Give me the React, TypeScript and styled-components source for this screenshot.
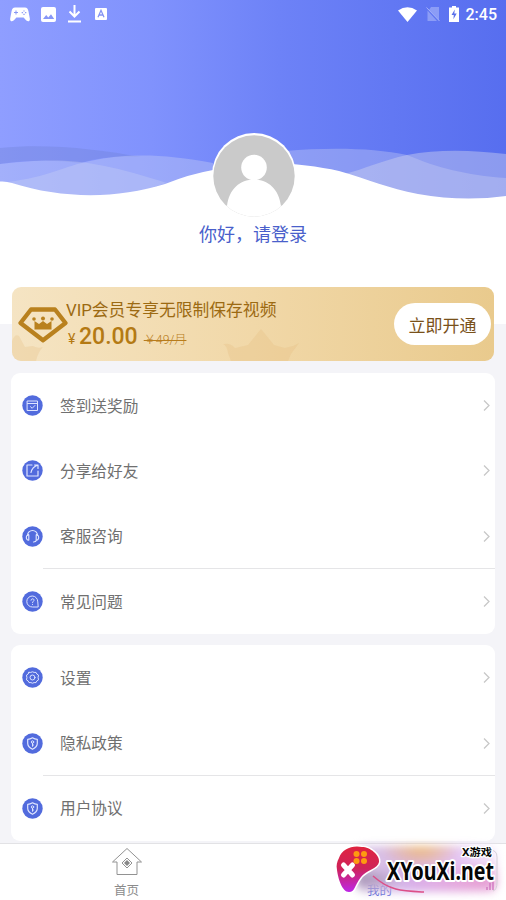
import React from 'react';
import styled, { createGlobalStyle } from 'styled-components';

const Global = createGlobalStyle`
  * { box-sizing: border-box; }
  body { margin: 0; background: #f4f4f8; font-family: Roboto, "Noto Sans CJK SC", sans-serif; }
  svg { display: block; flex: none; }
`;

const Screen = styled.main`
  width: 506px;
  height: 900px;
  overflow: hidden;
  display: flex;
  flex-direction: column;
  background: linear-gradient(#fff 324px, #f4f4f8 324px);
`;

const Hero = styled.header`
  position: relative;
  height: 287px;
  flex: none;
  display: flex;
  flex-direction: column;
  align-items: center;
`;

const Backdrop = styled.svg`
  position: absolute;
  top: 0;
  left: 0;
`;

const StatusBar = styled.div`
  position: relative;
  width: 100%;
  height: 28px;
  display: flex;
  justify-content: space-between;
  padding: 0 9px 0 10px;
`;

const StatusGroup = styled.div<{ $gap: number }>`
  display: flex;
  align-items: center;
  gap: ${p => p.$gap}px;
`;

const Clock = styled.span`
  color: #fff;
  font-size: 16px;
  line-height: 26px;
  padding-top: 2px;
  font-weight: 500;
  margin-left: -2px;
`;

const Avatar = styled.svg`
  position: relative;
  margin-top: 105px;
  margin-left: 1px;
`;

const Greeting = styled.div`
  position: relative;
  margin-top: 5px;
  font-size: 18px;
  line-height: 26px;
  color: #4a5fcb;
`;

const VipCard = styled.section`
  position: relative;
  flex: none;
  height: 74px;
  margin: 0 12px;
  border-radius: 9px;
  overflow: hidden;
  background: linear-gradient(90deg, #f5e4c3, #f1d8a8 50%, #e9ca8d);
  display: flex;
  align-items: center;
  padding: 0 3px 0 6px;
`;

const CrownPattern = styled.svg`
  position: absolute;
  left: 0;
  top: 0;
`;

const VipText = styled.div`
  position: relative;
  flex: 1;
  margin-left: -2px;
  padding-top: 3px;
`;

const VipTitle = styled.div`
  font-size: 16.8px;
  line-height: 26px;
  color: #9c6a12;
  white-space: nowrap;
`;

const PriceLine = styled.div`
  display: flex;
  align-items: baseline;
  line-height: 28px;
  color: #b47a14;
`;

const Currency = styled.span`
  font-size: 14px;
  width: 13px;
  padding-left: 2px;
`;

const Price = styled.span`
  font-size: 23px;
  font-weight: 500;
`;

const OldPrice = styled.span`
  margin-left: 6px;
  font-size: 12.2px;
  font-weight: 300;
  color: #b87c1c;
  text-decoration: line-through;
`;

const OpenButton = styled.button`
  position: relative;
  width: 97px;
  height: 42px;
  border: 0;
  border-radius: 21px;
  padding: 0;
  background: #fff;
  color: #79511a;
  font: 17px Roboto, "Noto Sans CJK SC", sans-serif;
`;

const MenuCard = styled.section<{ $top: number }>`
  flex: none;
  margin: ${p => p.$top}px 11px 0;
  border-radius: 9px;
  background: #fff;
`;

const MenuRow = styled.div<{ $divided?: boolean }>`
  position: relative;
  height: 65.3px;
  display: flex;
  align-items: center;
  padding: 0 4px 0 11px;
  &::before {
    content: '';
    display: ${p => (p.$divided ? 'block' : 'none')};
    position: absolute;
    left: 32px;
    right: 0;
    top: -1px;
    height: 1px;
    background: #e5e5e7;
  }
`;

const MenuLabel = styled.span`
  flex: 1;
  margin-left: 17px;
  padding-top: 2px;
  font-size: 15.7px;
  line-height: 24px;
  color: #707070;
`;

const TabBar = styled.nav`
  position: relative;
  flex: none;
  margin-top: 2px;
  height: 57px;
  border-top: 1px solid #e2e2e5;
  background: #fff;
  display: grid;
  grid-template-columns: 1fr 1fr;
`;

const Tab = styled.div<{ $active?: boolean }>`
  display: flex;
  flex-direction: column;
  align-items: center;
  padding-top: 3px;
  font-size: 12.5px;
  line-height: 18px;
  color: ${p => (p.$active ? '#4c62d9' : '#8b8b8b')};
`;

const TabText = styled.span`
  margin-top: 4px;
`;

const Watermark = styled.div`
  position: absolute;
  right: 0;
  bottom: 0;
  width: 174px;
  height: 58px;
`;

const Glow = styled.div`
  position: absolute;
  left: 24px;
  top: 4px;
  width: 141px;
  height: 46px;
  border-radius: 8px;
  filter: blur(4px);
  background:
    radial-gradient(ellipse at 46% 0, #efbd78 0, #efbd7800 38%),
    radial-gradient(ellipse at 90% 78%, #e598d0 0, #e598d000 45%),
    radial-gradient(ellipse at 3% 72%, #a08db0 0, #a08db000 25%),
    linear-gradient(90deg, #d0bddccc, #d7b2eb 40%, #e3c4f5 70%, #f0e2fb99);
`;

const MarkArt = styled.svg`
  position: absolute;
  left: 0;
  top: 0;
  overflow: visible;
`;

const outline = { fill: 'none', stroke: '#dfe5ff', strokeWidth: 1, strokeLinecap: 'round', strokeLinejoin: 'round' } as const;

const glyphs: Record<string, React.ReactNode> = {
  calendar: <path d="M5.5 6h10v9.500h-10zM5.5 8.500h10M8.500 11.7l1.7 1.6 2.7-2.8" />,
  share: <path d="M10 5H5v11h11v-5M12.5 5H16v3.5M16 5c-4 1.3-6.3 3.6-7 7.5" strokeWidth="1.2" />,
  headset: <path d="M5.5 9.500a5 5 0 0 1 10 0M6.8 8.700c-3.3-.2-3.3 5.6 0 5.400zM14.2 8.700c3.3-.2 3.3 5.6 0 5.400zM14.5 14c-.3 1.2-1.2 2-3 2" strokeWidth="1.15" />,
  question: <path d="M15.8 16h-5.300a5.500 5.500 0 1 1 5.300-5.500zM9 9.200c.1-2 3.2-1.8 3 .1-.1 1.1-1.5 1.1-1.5 2.4M10.5 13.5v.1" />,
  gear: <><path d="M7 5.400Q9 5.700 10.500 4.800q1.500.9 3.500.6.500 2 2.500 2.700-.8 2.400 0 4.800-2 .7-2.500 2.700-2-.3-3.500.6-1.500-.9-3.500-.6-.5-2-2.500-2.700.8-2.400 0-4.800 2-.7 2.500-2.700z" /><circle cx="10.5" cy="10.5" r="2.500" /></>,
  shield: <><path d="M10.5 4.8q2.3 1.5 4.8 1.5v4q0 3.8-4.8 6-4.8-2.2-4.8-6v-4q2.5 0 4.8-1.5z" strokeWidth="1.2" /><circle cx="10.5" cy="9" r="1.2" /><path d="M10.5 10.3v3M10.5 12h1" /></>,
};

const MenuIcon = ({ name }: { name: string }) => (
  <svg width="21" height="21" viewBox="0 0 21 21">
    <circle cx="10.5" cy="10.5" r="10.2" fill="#526bdd" />
    <g {...outline}>{glyphs[name]}</g>
  </svg>
);

const Chevron = () => (
  <svg width="9" height="13" viewBox="0 0 9 13">
    <path d="M2 1.5l5 5-5 5" fill="none" stroke="#c8c8c8" strokeWidth="1.3" />
  </svg>
);

const menus = [
  [['calendar', '签到送奖励'], ['share', '分享给好友'], ['headset', '客服咨询'], ['question', '常见问题']],
  [['gear', '设置'], ['shield', '隐私政策'], ['shield', '用户协议']],
];

const Menu = ({ items, top }: { items: string[][]; top: number }) => (
  <MenuCard $top={top}>
    {items.map(([icon, label], i) => (
      <MenuRow key={label} $divided={i === items.length - 1}>
        <MenuIcon name={icon} />
        <MenuLabel>{label}</MenuLabel>
        <Chevron />
      </MenuRow>
    ))}
  </MenuCard>
);

const Waves = () => (
  <Backdrop width="506" height="210" viewBox="0 0 506 210">
    <defs>
      <linearGradient id="sky">
        <stop offset="0" stopColor="#8f9eff" />
        <stop offset=".3" stopColor="#8092fd" />
        <stop offset=".55" stopColor="#6d82f7" />
        <stop offset="1" stopColor="#576eef" />
      </linearGradient>
    </defs>
    <path fill="url(#sky)" d="M0 0h506v210H0z" />
    <path fill="#7180d5" fillOpacity=".35" d="M0 148C45 143 98 149 141 157Q108 155 80 163Q42 158 0 164z" />
    <path fill="#c9d0f4" fillOpacity=".35" d="M0 164C65 156 98 161 167 183L110 200 0 190z" />
    <path fill="#c9d0f4" fillOpacity=".38" d="M8 182C48 177 65 166 90 161C127 153 165 154 213 163L213 190 100 210z" />
    <path fill="#c9d0f4" fillOpacity=".36" d="M285 151C330 147 375 148 407 155C438 168 465 175 506 178V205H330L285 190z" />
    <path fill="#cbd0ef" fillOpacity=".46" d="M344 174C365 169 383 160 407 155C438 149 472 150 506 154V210H400z" />
    <path fill="#fff" d="M0 181.5Q6 181 12 183C62 199 117 199 165 184Q190 174 213 170C255 159 303 163 339 171C370 180 388 188 418 194Q463 202 506 196V210H0z" />
  </Backdrop>
);

export default function App() {
  return (
    <>
      <Global />
      <Screen>
        <Hero>
          <Waves />
          <StatusBar>
            <StatusGroup $gap={11}>
              <svg width="20" height="16" viewBox="0 0 20 16">
                <path fill="#fff" d="M5 1.500h10c2 0 3 1.2 3.5 4l1.3 7c.5 3.3-2.7 3.3-4.200 1.2L13.6 11.500H6.400l-2 2.2c-1.5 2.1-4.700 2.1-4.200-1.2L1.5 5.500C2 2.700 3 1.500 5 1.500z" />
                <path d="M6 4.5v4M4 6.5h4" stroke="#8796f4" strokeWidth="1" />
                <path d="M14 4.4v1.2M14 7.8v1.2M11.7 6.7h1.2M15.1 6.7h1.2" stroke="#8796f4" strokeWidth="1.2" />
              </svg>
              <svg width="15" height="15" viewBox="0 0 15 15">
                <rect width="15" height="15" rx="2" fill="#fff" />
                <path d="M2 12l3.2-4 2.1 2.5L10 7.3l3.2 4.7z" fill="#8797f7" />
              </svg>
              <svg width="14" height="18" viewBox="0 0 14 18">
                <path d="M7.500 0v10M2.500 6.500l5 5 5-5M1 16.500h13" fill="none" stroke="#fff" strokeWidth="2" />
              </svg>
              <svg width="17" height="14" viewBox="0 0 17 14">
                <rect x="3" y="1" width="12" height="12" rx="1" fill="#fff" />
                <path d="M6 10.3l3-7 3 7M7 8h4" fill="none" stroke="#8494f3" strokeWidth="1.3" />
              </svg>
            </StatusGroup>
            <StatusGroup $gap={9}>
              <svg width="19" height="15" viewBox="0 0 19 15">
                <path d="M0 3.5Q9.5-3.2 19 3.5L9.5 15z" fill="#fff" />
              </svg>
              <svg width="14" height="16" viewBox="0 0 14 16">
                <path d="M5 1h8v13.5L3 4zM1.5 4.5L11 15H1.5z" fill="#a0aef8" fillOpacity=".7" />
                <path d="M.5 1.5l13 13.5" stroke="#a4b1fa" strokeWidth="1" />
              </svg>
              <svg width="10" height="16" viewBox="0 0 10 16">
                <path d="M3 0h4v1.5h3V16H0V1.5h3z" fill="#fff" />
                <path d="M5.8 3.5L2.5 9h2.3l-.4 4.2 3.3-5.7H5.3z" fill="#5a70ea" />
              </svg>
              <Clock>2:45</Clock>
            </StatusGroup>
          </StatusBar>
          <Avatar width="84" height="84" viewBox="0 0 84 84">
            <clipPath id="face"><circle cx="42" cy="43" r="40.7" /></clipPath>
            <circle cx="42" cy="42" r="42" fill="#fff" />
            <g clipPath="url(#face)">
              <path d="M0 0h84v84H0z" fill="#cacaca" />
              <circle cx="42" cy="34.5" r="12.8" fill="#fff" />
              <path d="M10 84V71L15 73C17 56 28 46.5 42 46.5S67 56 69 73L75 71V84z" fill="#fff" />
            </g>
            <path d="M10 73h5v11h54V73h8v11H6z" fill="#fff" />
          </Avatar>
          <Greeting>你好，请登录</Greeting>
        </Hero>

        <VipCard>
          <CrownPattern width="482" height="74" viewBox="0 0 482 74">
            <g fill="#e3b878" fillOpacity=".25">
              <path d="M0 54q3-8 7-5l6 11 8-1q5 3 10 1-5 5-7 14H0z" />
              <path d="M213 57q5-1 10 4l13-3 13-16 13 16 11 3 8-2 6-3-8 11-3 7h-57l-3-8q-1-7-5-9z" />
            </g>
          </CrownPattern>
          <svg width="50" height="37" viewBox="0 0 50 37">
            <path d="M13 3h24l10.5 13.5L25 33.8 2.5 16.5z" fill="none" stroke="#b9811e" strokeWidth="4.300" strokeLinejoin="round" transform="translate(0 .5)" />
            <path d="M16.500 15l4.500 3 4-3 4 3 4.500-3v8.500h-17z" fill="#b9811e" />
            <g fill="#b9811e"><circle cx="16" cy="13" r="1.8" /><circle cx="25" cy="12.500" r="2" /><circle cx="34" cy="13" r="1.8" /></g>
          </svg>
          <VipText>
            <VipTitle>VIP会员专享无限制保存视频</VipTitle>
            <PriceLine><Currency>¥</Currency><Price>20.00</Price><OldPrice>￥49/月</OldPrice></PriceLine>
          </VipText>
          <OpenButton>立即开通</OpenButton>
        </VipCard>

        <Menu items={menus[0]} top={12} />
        <Menu items={menus[1]} top={11} />

        <TabBar>
          <Tab>
            <svg width="32" height="31" viewBox="0 0 32 31">
              <g fill="none" stroke="#929292">
                <path d="M1.5 15L16 1.5 30.5 15H26v12.5H6V15z" />
                <path d="M16 11l5 5-5 5-5-5z" />
              </g>
              <path d="M16 13l3 3-3 3-3-3z" fill="#888" />
            </svg>
            <TabText>首页</TabText>
          </Tab>
          <Tab $active>
            <svg width="32" height="31" viewBox="0 0 32 31" />
            <TabText>我的</TabText>
          </Tab>
          <Watermark>
            <Glow />
            <MarkArt width="174" height="58" viewBox="0 0 174 58">
              <defs>
                <linearGradient id="pad" x2="0" y2="1">
                  <stop offset="0" stopColor="#df243f" />
                  <stop offset=".48" stopColor="#cf2359" />
                  <stop offset="1" stopColor="#bd26e7" />
                </linearGradient>
              </defs>
              <path d="M158 8q7 0 7 7v25q0 8-4 9" fill="none" stroke="#d5d0d8" />
              <path d="M155 48v-3m3 3v-7m3 7v-10" stroke="#ce70bd" strokeWidth="1.3" />
              <path d="M41 34C58 49 70 49 92 50" fill="none" stroke="#dc4f88" strokeWidth="1.5" />
              <path d="M7 16C10 7 20 3 30 5C38 5 48 13 47 20C46 27 34 28 29 35C22 44 23 50 17 50C10 50 6 36 5 28C4 23 5 20 7 16z" fill="url(#pad)" stroke="#fff" strokeWidth="3" paintOrder="stroke" />
              <path d="M11.500 23l9 10M20.500 23l-9 10" stroke="#fff" strokeWidth="5" strokeLinecap="round" />
              <g fill="#fd9b10"><circle cx="24.5" cy="12" r="3" /><circle cx="32" cy="12" r="3" /><circle cx="24.5" cy="19" r="3" /><circle cx="32" cy="19" r="3" /></g>
              <g fontFamily="'Noto Sans', 'Noto Sans CJK SC', sans-serif" fontWeight="700" fill="#050505" stroke="#fff" strokeLinejoin="round" paintOrder="stroke">
                <text x="55" y="37.500" fontSize="24.5" strokeWidth="4" textLength="107" lengthAdjust="spacingAndGlyphs">XYouXi.net</text>
                <text x="130" y="14" fontSize="10.5" strokeWidth="2.5" textLength="30" lengthAdjust="spacingAndGlyphs">X游戏</text>
              </g>
            </MarkArt>
          </Watermark>
        </TabBar>
      </Screen>
    </>
  );
}
